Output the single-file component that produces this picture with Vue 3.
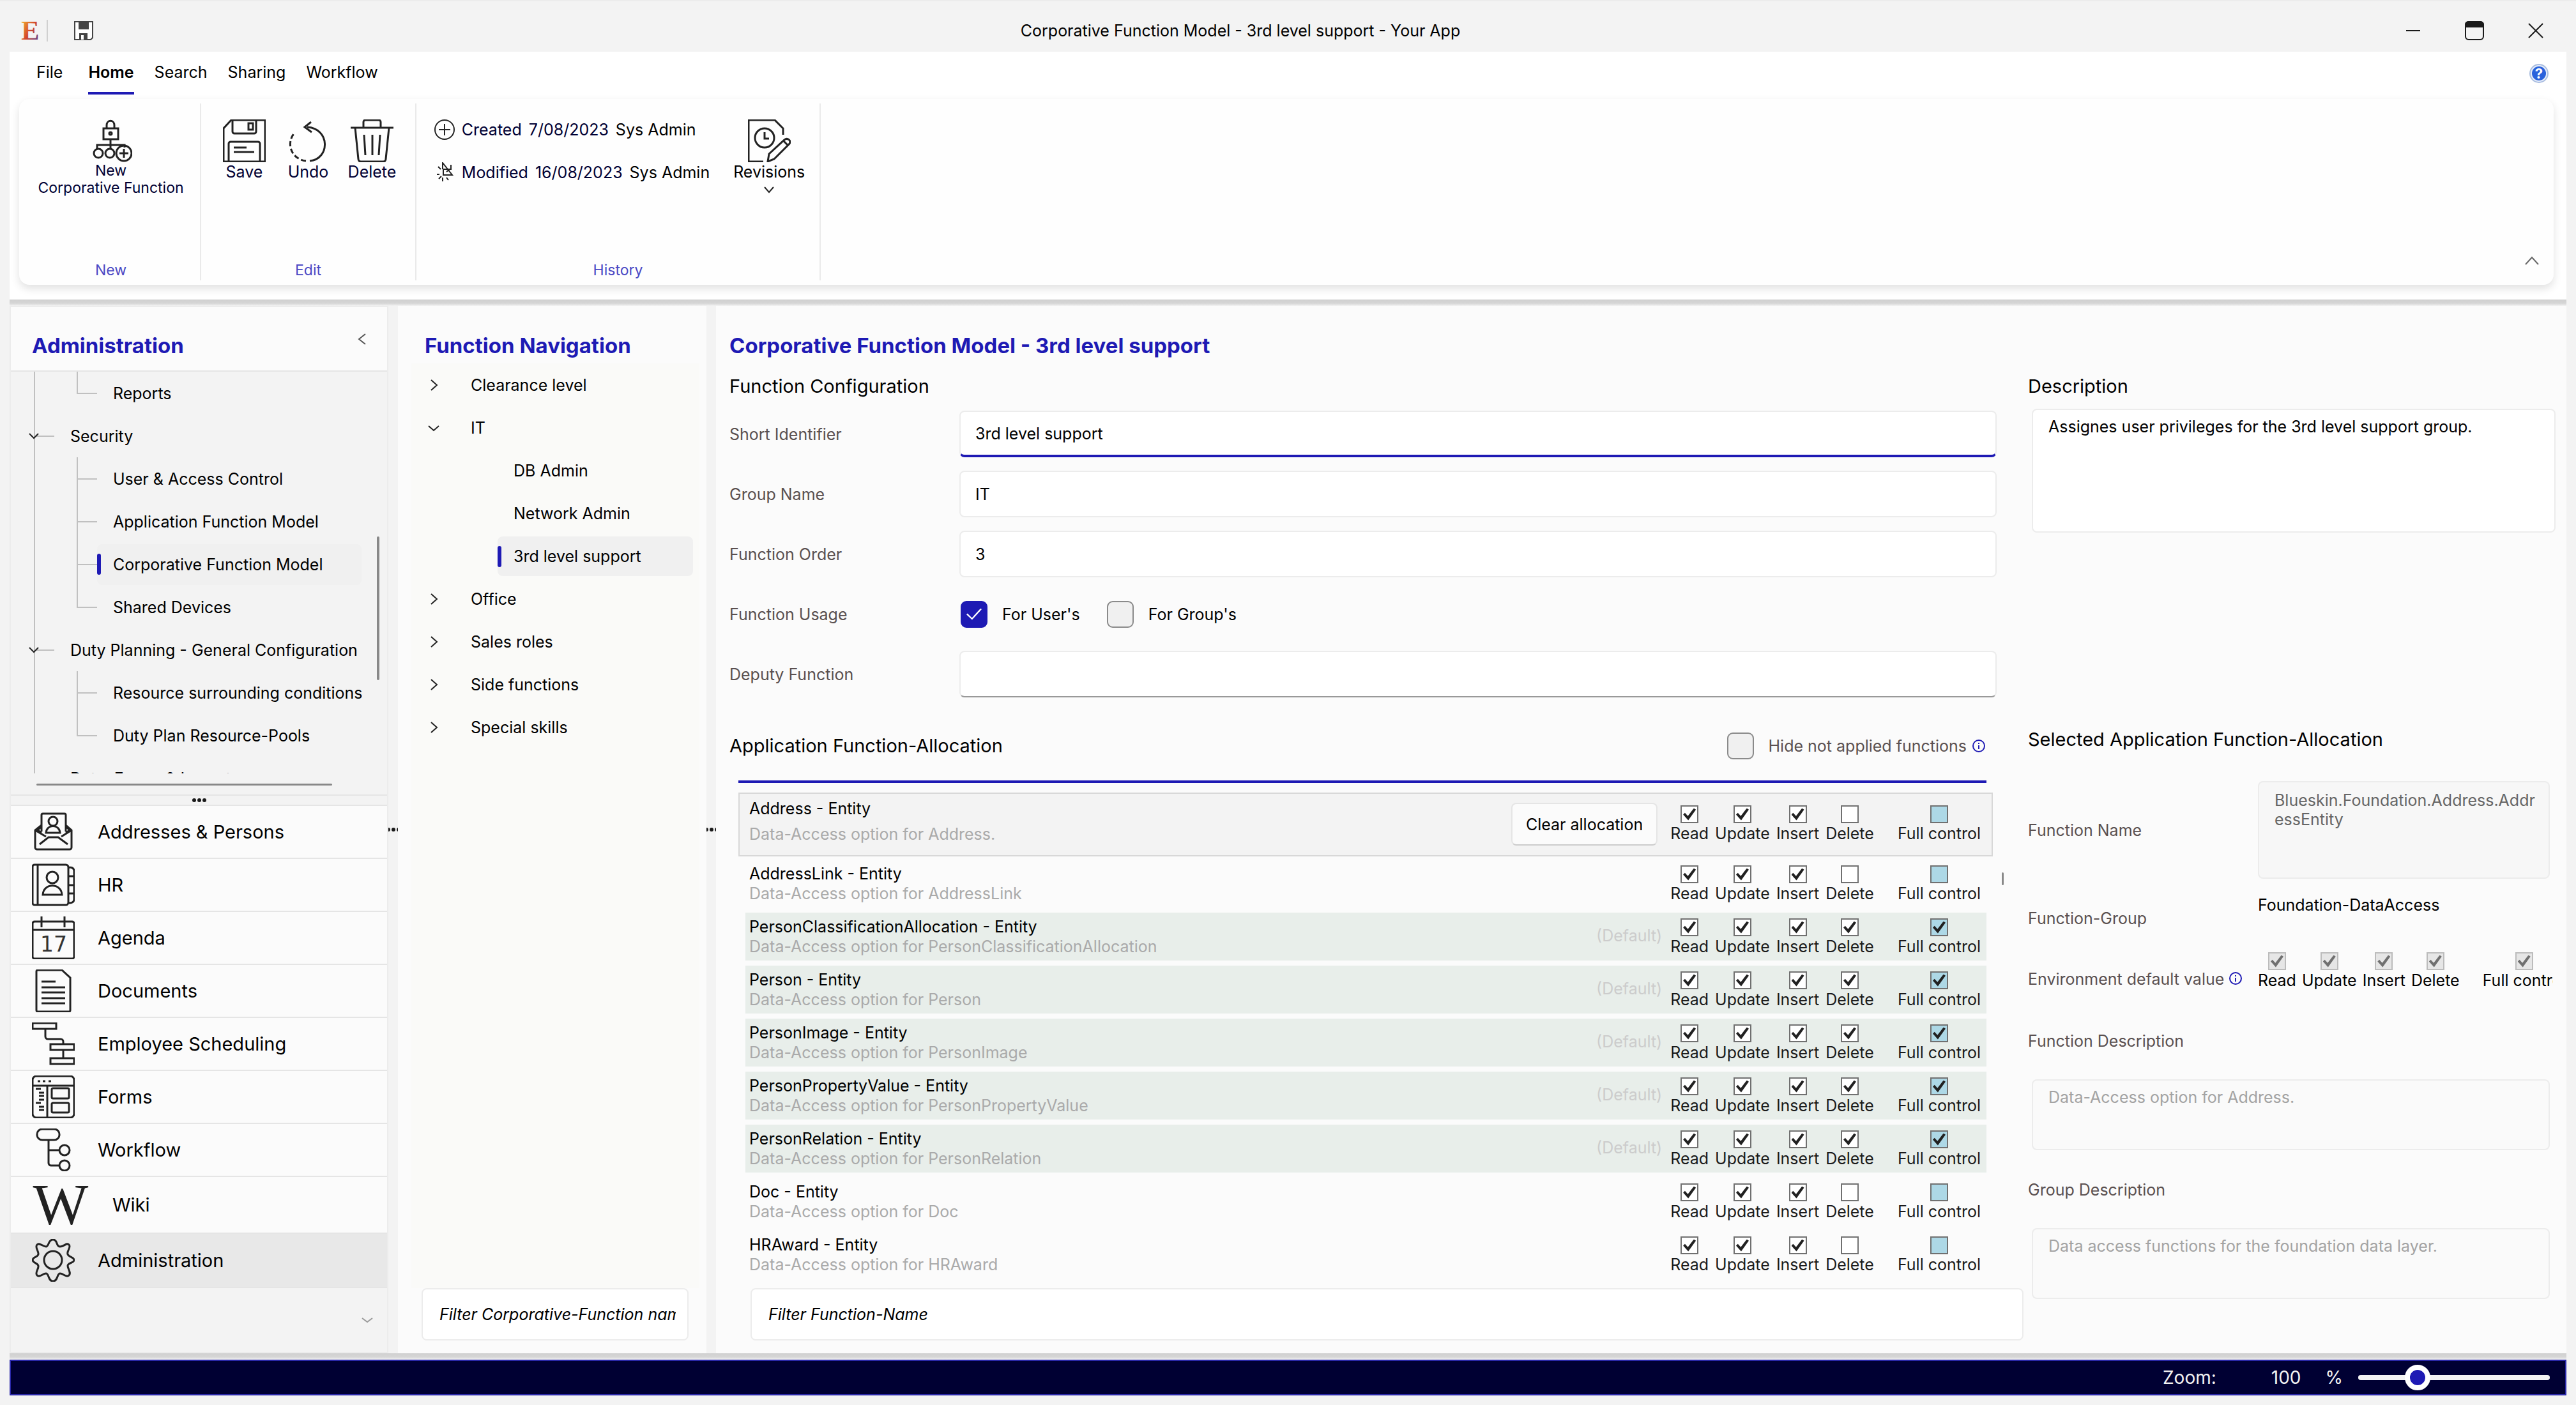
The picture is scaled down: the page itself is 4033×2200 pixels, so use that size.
<script setup>
import { ref, reactive } from 'vue'

const tabs = ['File', 'Home', 'Search', 'Sharing', 'Workflow']
const activeTab = ref('Home')

// inner markup of the 67 x 67 line icons
const icons = {
  addresses: '<path d="M15 33V7a2 2 0 0 1 2-2h34a2 2 0 0 1 2 2v26M15 23 5 31v27a3 3 0 0 0 3 3h51a3 3 0 0 0 3-3V31l-9-8M5 31l17 10M62 31 46 41M12 53l14-11h15l15 11M15 25l-6 6 6 4M53 25l6 6-6 4"/><circle cx="33" cy="17" r="7"/><path d="M22 35c1-14 21-14 22 0z"/>',
  hr: '<path d="M4 2h49a4 4 0 0 1 4 4v55a4 4 0 0 1-4 4H4a3 3 0 0 1-3-3V5a3 3 0 0 1 3-3zM9 2v63M58 6c5 0 8 2 8 6v44c0 4-3 6-8 6M57 20h9M57 34h9M57 47h9"/><circle cx="32" cy="22" r="9"/><path d="M17 49c1-19 29-19 30 0z"/>',
  agenda: '<rect x="1" y="8" width="65" height="58" rx="3"/><path d="M1 21h65M15 0v17M51 0v17"/><text x="34" y="55" text-anchor="middle">17</text>',
  documents: '<path d="M9 1h38l13 12v51a2 2 0 0 1-2 2H9a2 2 0 0 1-2-2V3a2 2 0 0 1 2-2zM15 19h22M15 28h37M15 36h37M15 45h37M15 53h37"/>',
  scheduling: '<path d="M1 1h37v9H1zM29 34h37v9H29zM29 56h37v9H29zM21 10v12a4 4 0 0 0 4 4h20a4 4 0 0 1 4 4v4M49 43v13"/>',
  forms: '<rect x="1" y="1" width="65" height="65" rx="6"/><rect x="31" y="20" width="27" height="16" rx="2"/><rect x="31" y="43" width="27" height="15" rx="2"/><path d="M1 16h65M24 16v50M9 9h4M17 9h4M26 9h4M6 21h8M11 27h8M11 32h8M11 38h8M6 43h8M11 49h8M11 54h8"/>',
  workflow: '<rect x="8" y="1" width="35" height="17" rx="8"/><path d="M26 18v36a4 4 0 0 0 4 4h13M26 34h17"/><circle cx="51" cy="34" r="8"/><circle cx="51" cy="58" r="8"/>',
  gear: '<circle cx="33" cy="33" r="14"/><path d="M33 1C41 1 37 12 44 12S54 5 58 9s-4 10-2 15 10 4 10 9-10 4-10 9 6 11 2 15-9-3-14-3-3 12-11 12S27 54 22 54 12 61 8 57s3-10 2-15-9-4-9-9 8-4 9-9S4 13 8 9s9 3 14 3S25 1 33 1z"/>',
  newFunction: '<path d="M27 13v-4c0-9 12-9 12 0v4M22 14h23v17H22zM33 31v9M12 46v-6h43v4M33 40v6"/><circle cx="33" cy="22" r="2"/><circle cx="14" cy="53" r="7"/><circle cx="32" cy="53" r="7"/><circle cx="54" cy="53" r="12"/><path d="M54 46v14M47 53h14"/>',
  save: '<path d="M13 1h53v65H1V14zM15 1v18a3 3 0 0 0 3 3h31a3 3 0 0 0 3-3V1M9 66V38a3 3 0 0 1 3-3h43a3 3 0 0 1 3 3v28M17 44h20M17 51h32"/><rect x="40" y="6" width="7" height="10"/>',
  undo: '<path d="M32 12c36 2 36 50 4 53"/><path d="M38 4 28 12l11 8"/><path stroke-dasharray="8 4" d="M30 65C6 62-2 36 13 20"/>',
  trash: '<path d="M0 13h67M20 13V4a3 3 0 0 1 3-3h21a3 3 0 0 1 3 3v9M7 13l5 49a4 4 0 0 0 4 4h35a4 4 0 0 0 4-4l5-49M21 24l2 32M34 24v32M46 24l-2 32"/>',
  revisions: '<path d="M24 66H1V1h41l13 13v10"/><circle cx="26" cy="29" r="15"/><path d="M26 20v10h7M31 66l2-12 24-22c5-4 11 1 8 6L41 62zM55 33l8 8"/>'
}

const tree = [
  { label: 'Reports', last: true },
  { label: 'Security', group: true },
  { label: 'User & Access Control' },
  { label: 'Application Function Model' },
  { label: 'Corporative Function Model', selected: true },
  { label: 'Shared Devices', last: true },
  { label: 'Duty Planning - General Configuration', group: true },
  { label: 'Resource surrounding conditions' },
  { label: 'Duty Plan Resource-Pools', last: true },
  { label: 'Data, Forms & Layouts', group: true }
]

const modules = [
  { label: 'Addresses & Persons', icon: 'addresses' },
  { label: 'HR', icon: 'hr' },
  { label: 'Agenda', icon: 'agenda' },
  { label: 'Documents', icon: 'documents' },
  { label: 'Employee Scheduling', icon: 'scheduling' },
  { label: 'Forms', icon: 'forms' },
  { label: 'Workflow', icon: 'workflow' },
  { label: 'Wiki' },
  { label: 'Administration', icon: 'gear' }
]
const activeModule = ref('Administration')

const functions = [
  { label: 'Clearance level', state: 'closed' },
  { label: 'IT', state: 'open' },
  { label: 'DB Admin' },
  { label: 'Network Admin' },
  { label: '3rd level support', selected: true },
  { label: 'Office', state: 'closed' },
  { label: 'Sales roles', state: 'closed' },
  { label: 'Side functions', state: 'closed' },
  { label: 'Special skills', state: 'closed' }
]

const form = reactive({
  identifier: '3rd level support',
  group: 'IT',
  order: '3',
  forUsers: true,
  forGroups: false,
  deputy: '',
  description: 'Assignes user privileges for the 3rd level support group.'
})

const rights = ['Read', 'Update', 'Insert', 'Delete', 'Full control']
const entity = (name, isDefault, text) => ({
  name: name + ' - Entity',
  text: text || 'Data-Access option for ' + name,
  isDefault,
  rights: [true, true, true, isDefault, isDefault]
})
const entities = reactive([
  entity('Address', false, 'Data-Access option for Address.'),
  entity('AddressLink', false),
  entity('PersonClassificationAllocation', true),
  entity('Person', true),
  entity('PersonImage', true),
  entity('PersonPropertyValue', true),
  entity('PersonRelation', true),
  entity('Doc', false),
  entity('HRAward', false)
])
const selectedEntity = ref(0)

const clearAllocation = (row) => {
  row.rights = row.rights.map(() => false)
}

const hideNotApplied = ref(false)
const zoom = ref(100)
</script>

<template>
  <div class="window">
    <header class="titlebar">
      <div class="quick">
        <svg class="logo" viewBox="0 0 28 32">
          <defs>
            <linearGradient id="logo-fill" x1="0" y1="0" x2="1" y2="1">
              <stop offset="0" stop-color="#f7c531" />
              <stop offset="0.5" stop-color="#d4472a" />
              <stop offset="1" stop-color="#3a3fa8" />
            </linearGradient>
          </defs>
          <text x="14" y="31" text-anchor="middle" fill="url(#logo-fill)">E</text>
        </svg>
        <button class="quick-save" aria-label="Save">
          <svg viewBox="0 0 30 30">
            <path d="M1 1h28v25l-3 3H1z" fill="#fff" stroke="#444" stroke-width="2" />
            <path d="M7 1h16v12H7zM8 19h13v10H8z" fill="#444" />
            <path d="M11 22h4v7h-4z" fill="#fff" />
          </svg>
        </button>
      </div>
      <h1 class="window-title">Corporative Function Model - 3rd level support - Your App</h1>
      <div class="window-buttons">
        <button aria-label="Minimize"><svg viewBox="0 0 32 32"><path d="M5 16h22" /></svg></button>
        <button aria-label="Maximize">
          <svg viewBox="0 0 32 32"><rect x="2" y="2" width="28" height="28" rx="5" /><path d="M2 10V7q0-5 5-5h18q5 0 5 5v3z" fill="#1a1a1a" /></svg>
        </button>
        <button aria-label="Close"><svg viewBox="0 0 32 32"><path d="m5 5 22 22M27 5 5 27" /></svg></button>
      </div>
    </header>

    <section class="ribbon">
      <div class="tab-row">
        <nav class="tabs">
          <button
            v-for="tab in tabs"
            :key="tab"
            class="tab"
            :class="{ active: tab === activeTab }"
            @click="activeTab = tab"
          >{{ tab }}</button>
        </nav>
        <button class="help" aria-label="Help">
          <svg viewBox="0 0 32 32">
            <circle cx="16" cy="16" r="15" fill="#a9bde0" />
            <circle cx="16" cy="16" r="13" fill="#e8effa" />
            <circle cx="16" cy="16" r="11" fill="#2a62dc" />
            <text x="16" y="24" text-anchor="middle">?</text>
          </svg>
        </button>
      </div>

      <div class="ribbon-card">
        <div class="ribbon-group group-new">
          <button class="ribbon-button narrow">
            <svg class="icon" viewBox="0 0 67 67" v-html="icons.newFunction"></svg>
            <span>New<br>Corporative Function</span>
          </button>
          <p class="group-name">New</p>
        </div>
        <div class="ribbon-group group-edit">
          <div class="button-row">
            <button class="ribbon-button">
              <svg class="icon" viewBox="0 0 67 67" v-html="icons.save"></svg>
              <span>Save</span>
            </button>
            <button class="ribbon-button">
              <svg class="icon" viewBox="0 0 67 67" v-html="icons.undo"></svg>
              <span>Undo</span>
            </button>
            <button class="ribbon-button">
              <svg class="icon" viewBox="0 0 67 67" v-html="icons.trash"></svg>
              <span>Delete</span>
            </button>
          </div>
          <p class="group-name">Edit</p>
        </div>
        <div class="ribbon-group group-history">
          <div class="button-row">
            <div class="history">
              <p>
                <svg class="icon small" viewBox="0 0 32 32"><circle cx="16" cy="16" r="15" /><path d="M16 7v18M7 16h18" /></svg>
                <span>Created</span> <span>7/08/2023</span> <b>Sys Admin</b>
              </p>
              <p>
                <svg class="icon small" viewBox="0 0 32 32">
                  <path d="M13 11V1l15 19H14V11h12V4M19 15l5-4" />
                  <path d="M6 7l4 4M4 19h4M7 26l4-4M13 24v6M19 24l3 4" />
                </svg>
                <span>Modified</span> <span>16/08/2023</span> <b>Sys Admin</b>
              </p>
            </div>
            <button class="ribbon-button revisions">
              <svg class="icon" viewBox="0 0 67 67" v-html="icons.revisions"></svg>
              <span>Revisions</span>
              <svg class="chevron" viewBox="0 0 18 18"><path d="m2 5 7 8 7-8" /></svg>
            </button>
          </div>
          <p class="group-name">History</p>
        </div>
        <button class="collapse" aria-label="Collapse ribbon">
          <svg class="chevron wide" viewBox="0 0 24 24"><path d="m2 18 10-11 10 11" /></svg>
        </button>
      </div>
    </section>
    <div class="edge"></div>

    <div class="workspace">
      <aside class="sidebar">
        <div class="sidebar-head">
          <h2>Administration</h2>
          <button aria-label="Collapse sidebar"><svg class="chevron" viewBox="0 0 18 18"><path d="m14 1-10 8 10 8" /></svg></button>
        </div>
        <div class="tree-pane">
          <ul class="tree">
            <li v-for="node in tree" :key="node.label" class="tree-row">
              <span class="guide" :class="{ joined: node.group }">
                <svg v-if="node.group" class="chevron expander" viewBox="0 0 18 18"><path d="m2 6 7 7 7-7" /></svg>
              </span>
              <span v-if="!node.group" class="guide joined child" :class="{ last: node.last }"></span>
              <a href="#" class="tree-item" :class="{ selected: node.selected }">{{ node.label }}</a>
            </li>
          </ul>
          <div class="tree-thumb"></div>
        </div>
        <div class="tree-hscroll"><div></div></div>
        <div class="grip">
          <svg class="dots" viewBox="0 0 24 8"><circle cx="4" cy="4" r="3" /><circle cx="12" cy="4" r="3" /><circle cx="20" cy="4" r="3" /></svg>
        </div>
        <ul class="modules">
          <li v-for="item in modules" :key="item.label">
            <button
              class="module"
              :class="{ active: item.label === activeModule, tall: !item.icon }"
              @click="activeModule = item.label"
            >
              <svg v-if="item.icon" class="icon" viewBox="0 0 67 67" v-html="icons[item.icon]"></svg>
              <svg v-else class="icon wiki" viewBox="0 0 90 67"><text x="45" y="64" text-anchor="middle">W</text></svg>
              <span>{{ item.label }}</span>
            </button>
          </li>
        </ul>
        <div class="sidebar-foot">
          <button aria-label="More"><svg class="chevron" viewBox="0 0 18 18"><path d="m1 6 8 6 8-6" /></svg></button>
        </div>
      </aside>

      <div class="gutter">
        <svg class="dots" viewBox="0 0 24 8"><circle cx="4" cy="4" r="3" /><circle cx="12" cy="4" r="3" /><circle cx="20" cy="4" r="3" /></svg>
      </div>

      <aside class="functions">
        <h2>Function Navigation</h2>
        <ul class="function-list">
          <li v-for="item in functions" :key="item.label" class="function-row" :class="{ leaf: !item.state }">
            <svg v-if="item.state" class="chevron" viewBox="0 0 18 18">
              <path :d="item.state === 'open' ? 'm1 6 8 7 8-7' : 'm5 1 9 8-9 8'" />
            </svg>
            <a href="#" class="function-item" :class="{ selected: item.selected }">{{ item.label }}</a>
          </li>
        </ul>
        <input class="field filter" placeholder="Filter Corporative-Function name" aria-label="Filter Corporative-Function name">
      </aside>

      <div class="gutter">
        <svg class="dots" viewBox="0 0 24 8"><circle cx="4" cy="4" r="3" /><circle cx="12" cy="4" r="3" /><circle cx="20" cy="4" r="3" /></svg>
      </div>

      <main class="content">
        <section class="config">
          <h2>Corporative Function Model - 3rd level support</h2>
          <h3>Function Configuration</h3>
          <div class="form">
            <label for="identifier">Short Identifier</label>
            <input id="identifier" v-model="form.identifier" class="field focused">
            <label for="group">Group Name</label>
            <input id="group" v-model="form.group" class="field">
            <label for="order">Function Order</label>
            <input id="order" v-model="form.order" class="field">
            <span class="caption">Function Usage</span>
            <div class="usage">
              <label><input v-model="form.forUsers" type="checkbox" class="check">For User's</label>
              <label><input v-model="form.forGroups" type="checkbox" class="check">For Group's</label>
            </div>
            <label for="deputy">Deputy Function</label>
            <input id="deputy" v-model="form.deputy" class="field deputy">
          </div>

          <div class="allocation-head">
            <h3>Application Function-Allocation</h3>
            <label class="hide-toggle">
              <input v-model="hideNotApplied" type="checkbox" class="check">
              Hide not applied functions
              <svg class="info" viewBox="0 0 20 20"><circle cx="10" cy="10" r="9" /><path d="M10 9v6M10 5v2" /></svg>
            </label>
          </div>
          <div class="progress"></div>
          <div class="entity-pane">
            <ul class="entities">
              <li
                v-for="(row, index) in entities"
                :key="row.name"
                class="entity"
                :class="{ selected: index === selectedEntity, preset: row.isDefault }"
                @click="selectedEntity = index"
              >
                <div class="entity-text">
                  <p>{{ row.name }}</p>
                  <p class="muted">{{ row.text }}</p>
                </div>
                <button v-if="index === selectedEntity" class="clear" @click.stop="clearAllocation(row)">Clear allocation</button>
                <span v-if="row.isDefault" class="default">(Default)</span>
                <div class="rights">
                  <label v-for="(right, i) in rights" :key="right">
                    <input v-model="row.rights[i]" type="checkbox" class="tick" @click.stop>
                    {{ right }}
                  </label>
                </div>
              </li>
            </ul>
            <div class="entity-thumb"></div>
          </div>
          <input class="field filter filter-main" placeholder="Filter Function-Name" aria-label="Filter Function-Name">
        </section>

        <section class="details">
          <h3><label for="description">Description</label></h3>
          <textarea id="description" v-model="form.description" class="area description"></textarea>

          <h3 class="selected-title">Selected Application Function-Allocation</h3>
          <div class="detail-row">
            <label for="fn-name">Function Name</label>
            <textarea id="fn-name" class="area fn-name" readonly>Blueskin.Foundation.Address.AddressEntity</textarea>
          </div>
          <div class="detail-row fn-group">
            <span class="caption">Function-Group</span>
            <p>Foundation-DataAccess</p>
          </div>
          <div class="detail-row env">
            <span class="caption">Environment default value
              <svg class="info" viewBox="0 0 20 20"><circle cx="10" cy="10" r="9" /><path d="M10 9v6M10 5v2" /></svg>
            </span>
            <div class="rights">
              <label v-for="right in rights" :key="right">
                <input type="checkbox" class="tick" checked disabled>
                {{ right }}
              </label>
            </div>
          </div>
          <label for="fn-desc" class="block-label">Function Description</label>
          <textarea id="fn-desc" class="area note" readonly>Data-Access option for Address.</textarea>
          <label for="group-desc" class="block-label">Group Description</label>
          <textarea id="group-desc" class="area note" readonly>Data access functions for the foundation data layer.</textarea>
        </section>
      </main>
    </div>

    <div class="edge"></div>
    <footer class="status">
      <label for="zoom">Zoom:</label>
      <output for="zoom">{{ zoom }}</output>
      <span>%</span>
      <input id="zoom" v-model="zoom" type="range" min="30" max="280">
    </footer>
  </div>
</template>

<style>
body {
  margin: 0;
}
</style>

<style scoped>
.window {
  --blue: #1e1ab4;
  --line: #e5e5e5;
  display: flex;
  flex-direction: column;
  box-sizing: border-box;
  height: 100vh;
  padding: 0 15px 15px;
  border-top: 2px solid #ececec;
  background: #f3f3f3;
  color: #000;
  font-family: Inter, "Liberation Sans", sans-serif;
  font-size: 25px;
  line-height: 30px;
}

.window *, .window *::before {
  box-sizing: border-box;
}

h1, h2, h3, p, ul {
  margin: 0;
  padding: 0;
  font-weight: 400;
  list-style: none;
}

h2 {
  color: var(--blue);
  font-size: 33px;
  font-weight: 700;
  line-height: 40px;
  white-space: nowrap;
}

h3 {
  font-size: 29px;
  line-height: 40px;
}

button, input, textarea {
  margin: 0;
  padding: 0;
  border: 0;
  background: none;
  color: inherit;
  font: inherit;
}

a {
  color: inherit;
  text-decoration: none;
}

svg {
  display: block;
  flex: none;
}

.icon {
  width: 67px;
  height: 67px;
  fill: none;
  stroke: #222;
  stroke-width: 3px;
}

.icon.small {
  width: 32px;
  height: 32px;
  stroke-width: 2px;
}

.icon :deep(text) {
  fill: #333;
  stroke: none;
  font-family: "DejaVu Sans", sans-serif;
  font-size: 33px;
}

.chevron {
  width: 18px;
  height: 18px;
  fill: none;
  stroke: #222;
  stroke-width: 2px;
}

.chevron.wide {
  width: 24px;
  height: 24px;
  stroke: #666;
}

.dots {
  width: 24px;
  height: 8px;
  fill: #1a1a1a;
}

/* title bar */
.titlebar {
  display: flex;
  flex: none;
  align-items: center;
  height: 79px;
  padding-top: 12px;
}

.quick {
  display: flex;
  align-items: center;
  padding-left: 19px;
}

.logo {
  width: 41px;
  height: 34px;
  padding-right: 12px;
  border-right: 2px solid #d0d0d0;
  overflow: visible;
}

.logo text {
  font: 700 44px "Liberation Serif", serif;
}

.quick-save {
  width: 30px;
  height: 30px;
  margin-left: 41px;
}

.window-title {
  flex: 1;
  padding-left: 8px;
  font-size: 25px;
  text-align: center;
}

.window-buttons {
  display: flex;
}

.window-buttons button {
  display: flex;
  justify-content: center;
  width: 96px;
}

.window-buttons svg {
  width: 32px;
  height: 32px;
  fill: none;
  stroke: #1a1a1a;
  stroke-width: 2px;
}

/* ribbon */
.ribbon {
  flex: none;
  height: 388px;
  padding: 0 20px 0 15px;
  background: #fff;
}

.tab-row {
  display: flex;
  justify-content: space-between;
  align-items: center;
  height: 67px;
}

.tabs {
  display: flex;
  gap: 32px;
  height: 100%;
  padding-left: 27px;
}

.tab {
  border-bottom: 4px solid transparent;
}

.tab:first-child {
  margin-right: 8px;
}

.tab.active {
  border-color: var(--blue);
  font-weight: 600;
}

.help {
  margin-right: 7px;
}

.help svg {
  width: 32px;
  height: 32px;
}

.help text {
  fill: #fff;
  font: 700 22px Inter, sans-serif;
}

.ribbon-card {
  display: flex;
  height: 291px;
  margin-top: 7px;
  padding: 7px 0;
  border-radius: 16px;
  background: #fefefe;
  box-shadow: 0 6px 14px rgb(0 0 0 / 12%);
}

.ribbon-group {
  display: flex;
  flex-direction: column;
  justify-content: space-between;
  padding: 25px 0 1px;
  border-right: 2px solid #eaeaea;
  color: #000033;
  text-align: center;
}

.group-new {
  width: 285px;
  padding-left: 4px;
}

.group-edit {
  width: 337px;
}

.group-history {
  width: 633px;
}

.group-name {
  color: #4b48c4;
  font-size: 23px;
}

.button-row {
  display: flex;
  justify-content: center;
}

.group-history .button-row {
  padding-left: 14px;
}

.ribbon-button {
  display: flex;
  flex-direction: column;
  align-items: center;
  width: 100px;
}

.ribbon-button.narrow {
  width: 100%;
  font-size: 23px;
  line-height: 27px;
}

.ribbon-button.revisions {
  width: 130px;
  color: #000;
}

.revisions .chevron {
  margin-top: 4px;
}

.history {
  display: flex;
  flex-direction: column;
  gap: 35px;
  padding-right: 28px;
}

.history p {
  display: flex;
  align-items: center;
  gap: 11px;
}

.history b {
  color: #000;
  font-weight: 400;
}

.collapse {
  align-self: flex-end;
  margin: 0 22px 19px auto;
}

.edge {
  flex: none;
  height: 10px;
  background: linear-gradient(#d0d0d0, #d6d6d6 60%, #f3f3f3);
}

/* workspace */
.workspace {
  display: grid;
  flex: 1;
  grid-template-columns: 593px 15px 483px 15px minmax(0, 1fr);
  min-height: 0;
}

.gutter {
  display: flex;
  align-items: center;
  justify-content: center;
  overflow: hidden;
}

.sidebar {
  display: flex;
  flex-direction: column;
  min-height: 0;
  border: 2px solid #ececec;
}

.sidebar-head {
  display: flex;
  flex: none;
  justify-content: space-between;
  height: 101px;
  padding: 40px 24px 0 33px;
  border-bottom: 2px solid var(--line);
  background: #fbfbfb;
}

.sidebar-head button {
  height: 20px;
  margin-right: 6px;
}

.sidebar-head .chevron {
  stroke: #555;
}

.tree-pane {
  position: relative;
  flex: 1;
  min-height: 0;
  overflow: hidden;
}

.tree-row {
  display: flex;
  align-items: center;
  height: 67px;
  padding-left: 36px;
}

.guide {
  position: relative;
  flex: none;
  width: 32px;
  height: 100%;
  background: linear-gradient(#c0c0c0, #c0c0c0) 0 0 / 2px 100% no-repeat;
}

.guide.joined {
  background:
    linear-gradient(#c0c0c0, #c0c0c0) 0 0 / 2px 100% no-repeat,
    linear-gradient(#c0c0c0, #c0c0c0) 0 50% / 100% 2px no-repeat;
}

.guide.child {
  margin-left: 35px;
}

.guide.last {
  background:
    linear-gradient(#c0c0c0, #c0c0c0) 0 0 / 2px 50% no-repeat,
    linear-gradient(#c0c0c0, #c0c0c0) 0 50% / 100% 2px no-repeat;
}

.expander {
  position: absolute;
  top: 24px;
  left: -9px;
}

.tree-item {
  padding: 17px 0 17px 25px;
  white-space: nowrap;
}

.selected.tree-item,
.selected.function-item {
  position: relative;
  background: #f0f0f0;
  border-radius: 8px;
}

.selected.tree-item {
  width: 414px;
}

.selected.tree-item::before,
.selected.function-item::before {
  content: "";
  position: absolute;
  top: 15px;
  left: 0;
  width: 6px;
  height: 33px;
  border-radius: 3px;
  background: var(--blue);
}

.tree-thumb {
  position: absolute;
  top: 41%;
  right: 12px;
  width: 4px;
  height: 225px;
  border-radius: 2px;
  background: #888;
}

.tree-hscroll {
  flex: none;
  height: 35px;
  padding: 16px 86px 0 40px;
  border-bottom: 2px solid var(--line);
}

.tree-hscroll div {
  height: 3px;
  border-radius: 2px;
  background: #888;
}

.grip {
  display: flex;
  flex: none;
  align-items: center;
  justify-content: center;
  height: 14px;
}

.module {
  display: flex;
  align-items: center;
  gap: 36px;
  width: 100%;
  height: 83px;
  padding: 0 33px;
  border-top: 2px solid var(--line);
  background: #fbfbfb;
  font-size: 29px;
}

.module.tall {
  height: 89px;
}

.module.active {
  height: 85px;
  background: #e8e8e8;
}

.icon.wiki {
  width: 90px;
  overflow: visible;
}

.icon.wiki text {
  fill: #222;
  font-family: "Liberation Serif", serif;
  font-size: 92px;
}

.sidebar-foot {
  display: flex;
  flex: none;
  align-items: center;
  justify-content: flex-end;
  height: 102px;
  padding-right: 22px;
  border-top: 2px solid var(--line);
}

.sidebar-foot .chevron {
  stroke: #999;
}

.functions {
  display: flex;
  flex-direction: column;
  min-height: 0;
  padding: 42px 11px 20px 21px;
  background: #fbfbfb;
}

.functions h2 {
  padding-left: 21px;
}

.function-list {
  flex: 1;
  margin-top: 8px;
  background: #fafaf8;
}

.function-row {
  display: flex;
  align-items: center;
  height: 67px;
  padding: 0 10px 0 26px;
}

.function-item {
  flex: 1;
  padding: 16px 0 16px 49px;
  white-space: nowrap;
}

.leaf .function-item {
  margin-left: 109px;
  padding-left: 25px;
}

.field {
  width: 100%;
  height: 73px;
  padding: 0 23px;
  border: 2px solid #ececec;
  border-radius: 8px;
  background: #fff;
}

.field:focus, .area:focus {
  outline: 0;
}

.field.focused {
  border-bottom: 4px solid var(--blue);
}

.field.deputy {
  border-bottom-color: #999;
}

.field.filter {
  flex: none;
  width: auto;
  height: 82px;
  margin: 0 17px 0 16px;
  padding: 0 18px 0 26px;
}

.field.filter::placeholder {
  color: #000;
  font-style: italic;
}

/* content */
.content {
  display: grid;
  grid-template-columns: minmax(0, 1fr) 843px;
  gap: 7px;
  min-height: 0;
  padding-left: 21px;
  background: #fbfbfb;
}

.config {
  display: flex;
  flex-direction: column;
  min-height: 0;
  padding: 42px 0 20px;
}

.config h2 {
  margin-bottom: 24px;
}

.form {
  display: grid;
  grid-template-columns: 360px 1fr;
  grid-auto-rows: 73px;
  align-items: center;
  gap: 21px 0;
  margin: 18px 42px 0 0;
}

.form > label, .caption, .detail-row > label, .block-label, .hide-toggle {
  color: #5a5050;
}

.usage {
  display: flex;
  gap: 42px;
  padding-left: 2px;
}

.usage label, .hide-toggle {
  display: flex;
  align-items: center;
}

.check {
  appearance: none;
  display: grid;
  place-items: center;
  width: 42px;
  height: 42px;
  margin-right: 23px;
  border: 2px solid #8a8a8a;
  border-radius: 9px;
  background: #f0f0f0;
}

.check:checked {
  border-color: var(--blue);
  background: var(--blue);
}

.check:checked::before {
  content: "";
  width: 24px;
  height: 18px;
  background: #fff;
  clip-path: polygon(0 54%, 7% 45%, 36% 83%, 93% 0, 100% 8%, 37% 100%);
}

.allocation-head {
  display: flex;
  align-items: center;
  justify-content: space-between;
  margin: 55px 60px 0 0;
}

.info {
  display: inline-block;
  width: 20px;
  height: 20px;
  margin-left: 9px;
  fill: none;
  stroke: var(--blue);
  stroke-width: 2px;
}

.caption .info {
  margin-left: 1px;
}

.progress {
  flex: none;
  height: 4px;
  margin: 33px 58px 15px 14px;
  background: var(--blue);
}

.entity-pane {
  position: relative;
  flex: 1;
  min-height: 0;
  margin: 0 48px 12px 14px;
}

.entities {
  height: 100%;
  overflow: hidden;
}

.entity-thumb {
  position: absolute;
  top: 125px;
  right: -17px;
  width: 3px;
  height: 20px;
  border-radius: 2px;
  background: #888;
}

.entity {
  display: flex;
  align-items: flex-start;
  height: 75px;
  margin: 0 10px 8px 11px;
  padding: 7px 9px 0 6px;
  color: #1a1a1a;
}

.entity.preset {
  background: #e8eeea;
}

.entity.selected {
  height: 100px;
  margin: 0 0 5px;
  padding: 8px 17px 0 15px;
  border: 2px solid #d8d8d8;
  background: #f3f3f3;
}

.entity-text {
  display: flex;
  flex: 1;
  flex-direction: column;
  gap: 1px;
  color: #000;
}

.selected .entity-text {
  gap: 10px;
}

.entity .muted {
  color: #aaa;
}

.clear {
  height: 67px;
  margin: 6px 20px 0 0;
  padding: 0 21px;
  border: 2px solid #e5e5e5;
  border-bottom-color: #ccc;
  border-radius: 8px;
  background: #fbfbfb;
  color: #000;
}

.default {
  margin: 14px 13px 0 0;
  color: #ccc;
}

.rights {
  display: flex;
  gap: 10px;
  padding-top: 2px;
}

.selected .rights {
  padding-top: 10px;
}

.rights label {
  display: flex;
  flex-direction: column;
  align-items: center;
  gap: 1px;
  white-space: nowrap;
}

.rights label:last-child {
  margin-left: 27px;
}

.tick {
  appearance: none;
  display: grid;
  place-items: center;
  width: 28px;
  height: 28px;
  border: 2px solid #707070;
  background: #fff;
}

.rights label:last-child .tick {
  background: #add8e6;
}

.tick:checked::before {
  content: "";
  width: 20px;
  height: 19px;
  background: #212121;
  clip-path: polygon(0 52%, 14% 38%, 37% 64%, 84% 0, 100% 12%, 40% 100%);
}

.rights label .tick:disabled {
  border-color: #bcbcbc;
  background: #e6e6e6;
}

.tick:disabled::before {
  background: #707070;
}

.field.filter-main {
  margin: 0 0 0 33px;
}

.details {
  display: flex;
  flex-direction: column;
  overflow: hidden;
  padding: 106px 26px 0 0;
}

.area {
  display: block;
  flex: none;
  padding: 11px 24px;
  border: 2px solid #ececec;
  border-radius: 8px;
  background: #fff;
  resize: none;
}

.area.description {
  height: 194px;
  margin: 15px -9px 0 6px;
}

.selected-title {
  margin: 304px 0 45px;
}

.detail-row {
  display: grid;
  flex: none;
  grid-template-columns: 360px minmax(0, 1fr);
  align-items: center;
}

.area.fn-name {
  height: 153px;
  padding: 13px 16px 13px 24px;
  background: #f7f7f7;
  color: #666;
  word-break: break-all;
}

.fn-group {
  height: 72px;
  margin: 26px 0 8px;
}

.fn-group p {
  align-self: start;
}

.env {
  height: 102px;
  margin-right: -5px;
  overflow: hidden;
}

.env .rights {
  align-self: start;
  gap: 9px;
  overflow: hidden;
  padding-top: 9px;
}

.block-label {
  margin: 26px 0 40px;
  line-height: 40px;
}

.area.note {
  height: 111px;
  margin-left: 6px;
  background: #fafafa;
  color: #a3a3a3;
}

.note + .block-label {
  margin-top: 42px;
}

/* status bar */
.status {
  display: flex;
  flex: none;
  align-items: center;
  justify-content: flex-end;
  height: 56px;
  padding-right: 24px;
  border: 2px solid #2a28a8;
  background: #000033;
  color: #f3f3f3;
  font-size: 28px;
}

.status output {
  margin: 0 38px 0 86px;
}

.status input {
  appearance: none;
  width: 300px;
  height: 8px;
  margin-left: 24px;
  border-radius: 4px;
  background: #f3f3f3;
}

.status input::-webkit-slider-thumb {
  appearance: none;
  width: 40px;
  height: 40px;
  border: 8px solid #fff;
  border-radius: 50%;
  background: var(--blue);
}
</style>
